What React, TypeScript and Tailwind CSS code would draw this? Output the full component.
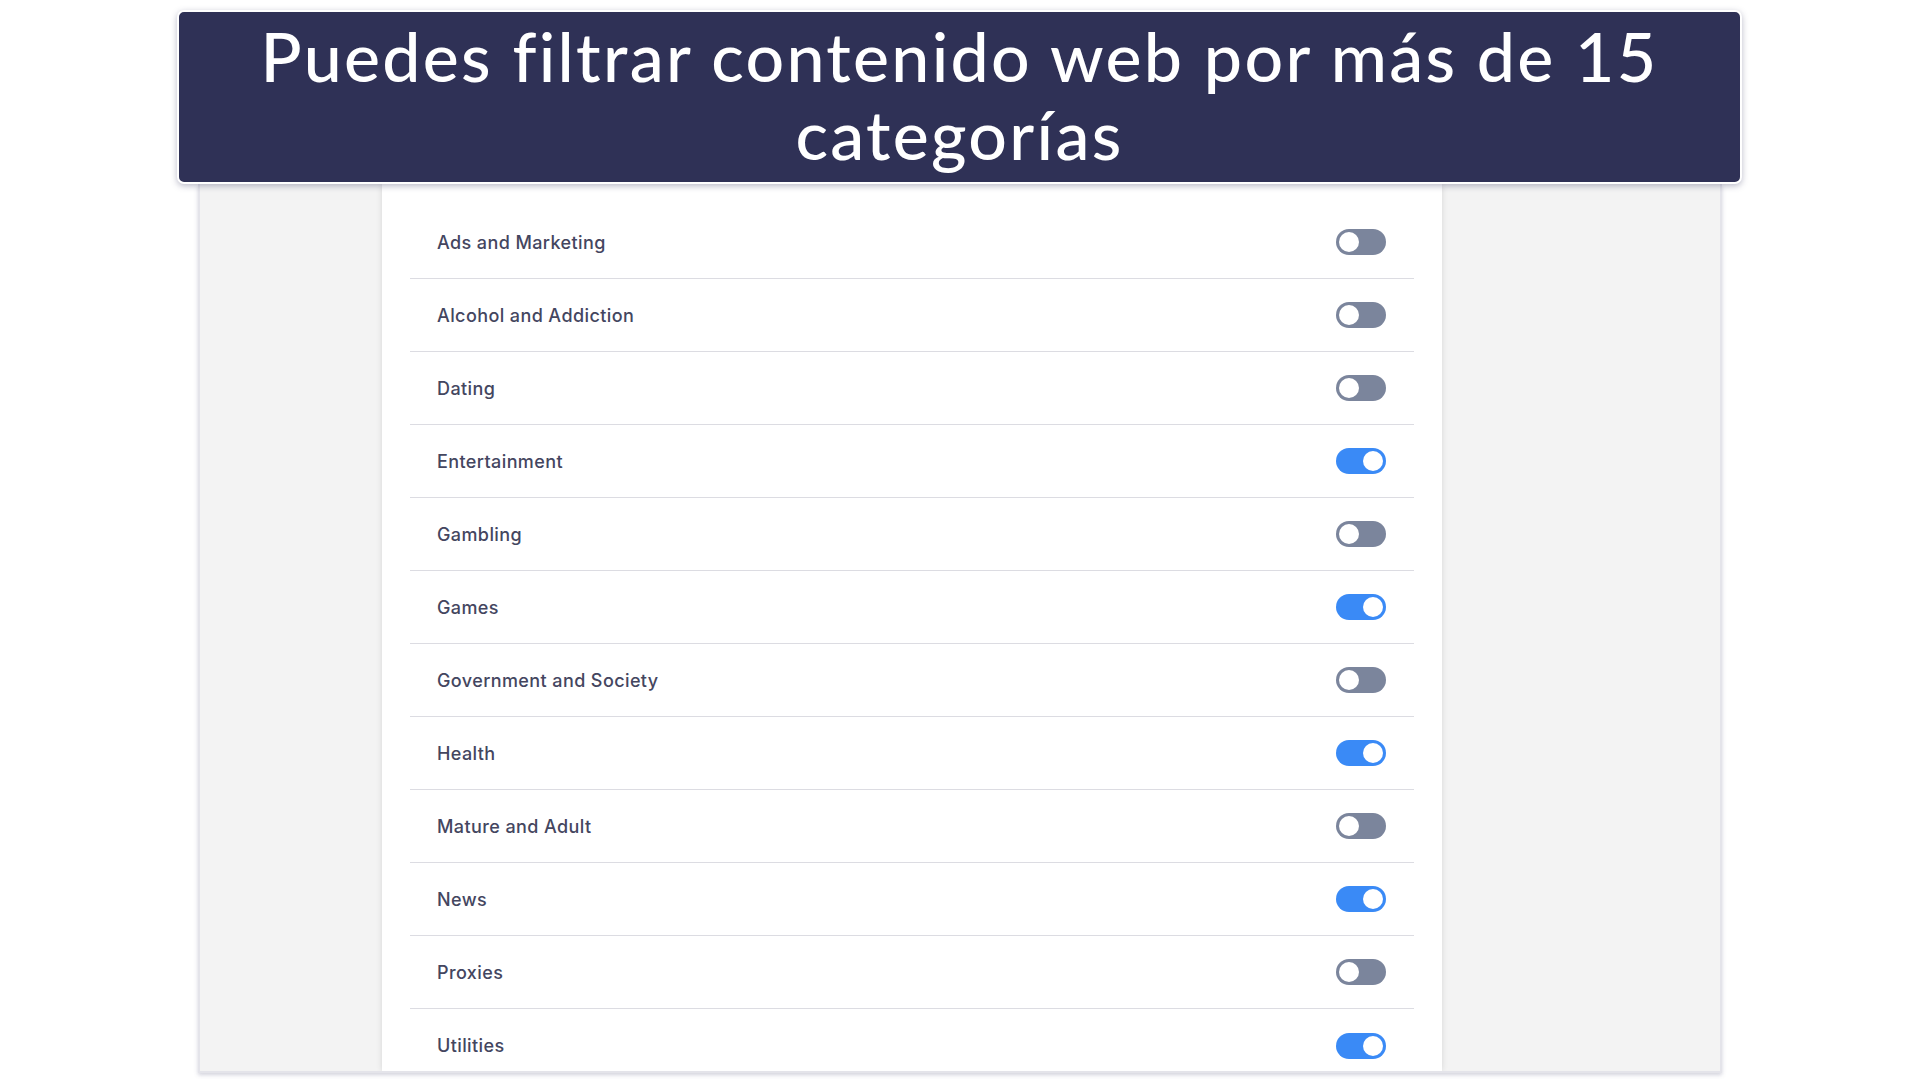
import React from "react";

const rows: { label: string; on: boolean }[] = [
  { label: "Ads and Marketing", on: false },
  { label: "Alcohol and Addiction", on: false },
  { label: "Dating", on: false },
  { label: "Entertainment", on: true },
  { label: "Gambling", on: false },
  { label: "Games", on: true },
  { label: "Government and Society", on: false },
  { label: "Health", on: true },
  { label: "Mature and Adult", on: false },
  { label: "News", on: true },
  { label: "Proxies", on: false },
  { label: "Utilities", on: true },
];

function Toggle({ on }: { on: boolean }) {
  return (
    <div
      className={
        "mr-[1px] flex h-[26px] w-[50px] shrink-0 items-center rounded-full px-[3px] " +
        (on ? "justify-end bg-[#3a8af6]" : "justify-start bg-[#7b859c]")
      }
    >
      <div className="h-[20px] w-[20px] rounded-full bg-white" />
    </div>
  );
}

export default function App() {
  return (
    <div className="h-[1079px] w-full overflow-hidden bg-white pt-[10px]">
      <div
        className="relative z-10 ml-[177px] flex h-[174px] w-[1565px] flex-col items-center justify-center rounded-[7px] border-2 border-white bg-[#2f3156] pb-[5px] text-center text-white shadow-[0_2px_6px_rgba(60,60,100,0.35)]"
        style={{ fontFamily: "Lato, 'Open Sans', sans-serif" }}
      >
        <div className="text-[68px] font-medium leading-[78px] tracking-[2.3px]">
          Puedes filtrar contenido web por más de 15
        </div>
        <div className="text-[68px] font-medium leading-[78px] tracking-[2.3px]">
          categorías
        </div>
      </div>
      <div className="ml-[198px] flex h-[889px] w-[1524px] overflow-hidden border-x-2 border-b-2 border-[#e4e4ea] bg-[#f3f3f3] shadow-[0_2px_4px_rgba(80,80,120,0.25)]">
        <div className="ml-[182px] h-full w-[1060px] bg-white px-[28px] pt-[22px] shadow-[0_0_6px_rgba(0,0,0,0.12)]">
          {rows.map((r, i) => (
            <div
              key={r.label}
              className={
                "flex h-[73px] items-center justify-between px-[27px] " +
                (i < rows.length - 1 ? "border-b border-[#dcdce2]" : "")
              }
            >
              <span
                className="text-[18px] font-medium tracking-[0.4px] text-[#44465f]"
                style={{ fontFamily: "Inter, 'Noto Sans', sans-serif" }}
              >
                {r.label}
              </span>
              <Toggle on={r.on} />
            </div>
          ))}
        </div>
      </div>
    </div>
  );
}
